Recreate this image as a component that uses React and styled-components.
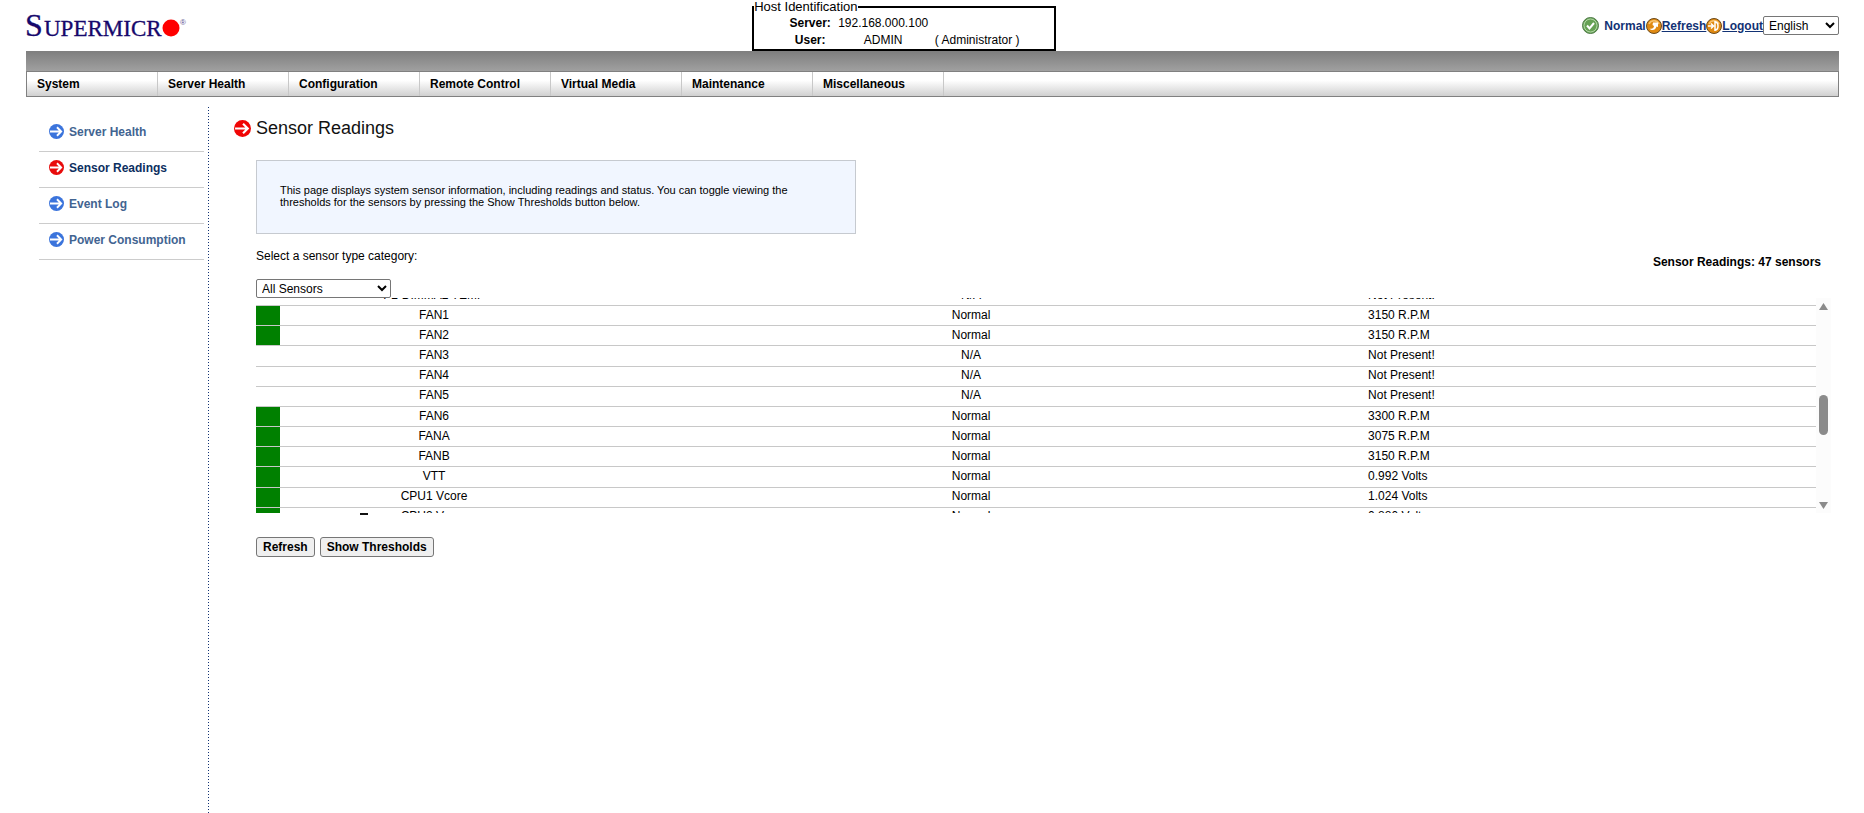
import React, { useLayoutEffect, useRef } from "react";
import styled, { createGlobalStyle } from "styled-components";

const GlobalStyle = createGlobalStyle`
  * {
    box-sizing: border-box;
  }

  body {
    margin: 0;
    background: #fff;
    color: #000;
    font-family: "Liberation Sans", Arial, sans-serif;
    font-size: 12px;
    line-height: 14px;
  }
`;

const Page = styled.div`
  min-height: 100vh;
  padding: 0 25px 0 26px;
  display: flex;
  flex-direction: column;
`;

const Header = styled.header`
  height: 51px;
  display: grid;
  grid-template-columns: 40% 304px 1fr;
  column-gap: 1px;
  align-items: start;
`;

const Logo = styled.svg`
  display: block;
  width: 164px;
  height: 36px;
  margin-top: 8px;
`;

const HostBox = styled.fieldset`
  height: 51px;
  margin: 0;
  padding: 0;
  border: 2px solid #000;
`;

const HostLegend = styled.legend`
  padding: 0;
  font-size: 13px;
`;

const HostTable = styled.table`
  width: 238px;
  margin: 0 auto;
  table-layout: fixed;
  border-collapse: collapse;
  text-align: center;

  th,
  td {
    height: 17px;
    padding: 0;
    white-space: nowrap;
  }
`;

const StatusBar = styled.div`
  margin-top: 16px;
  display: flex;
  justify-content: flex-end;
  align-items: center;
  color: #123274;
  font-weight: bold;
  line-height: 18px;
`;

const StatusText = styled.span`
  margin-left: 5px;
`;

const StatusLink = styled.a`
  display: flex;
  align-items: center;
  color: #123274;
`;

const Select = styled.select`
  width: ${(props) => props.$width};
  height: 19px;
  padding: 0 0 0 1px;
  border: 1px solid #767676;
  border-radius: 2px;
  background: #fff;
  color: #000;
  font-family: inherit;
  font-size: 12px;
`;

const Banner = styled.div`
  height: 20px;
  background: linear-gradient(#7e7e7e, #a0a0a0);
`;

const Menu = styled.nav`
  height: 26px;
  display: flex;
  border: 1px solid #808080;
  background: linear-gradient(#fff 35%, #d0d0d0);
`;

const MenuLink = styled.a`
  width: 131px;
  padding-left: 10px;
  border-right: 1px solid #c8c8c8;
  color: #000;
  font-weight: bold;
  line-height: 24px;
  text-decoration: none;
`;

const Body = styled.div`
  flex: 1;
  margin-top: 10px;
  display: flex;
`;

const Sidebar = styled.nav`
  width: 183px;
  padding: 9px 5px 0 13px;
  background: repeating-linear-gradient(#123274 0 1px, transparent 1px 3px) right top / 1px 100% no-repeat;
`;

const SideLink = styled.a`
  height: 36px;
  padding: 0 0 4px 10px;
  display: flex;
  align-items: center;
  gap: 5px;
  border-bottom: 1px solid #ccc;
  color: ${(props) => (props.$active ? "#0c2f5f" : "#426491")};
  font-weight: bold;
  text-decoration: none;
`;

const Main = styled.main`
  flex: 1;
  min-width: 0;
  padding: 10px 8px 24px 25px;
`;

const Title = styled.h1`
  height: 22px;
  margin: 0;
  display: flex;
  align-items: center;
  gap: 5px;
  color: #111;
  font-size: 18px;
  font-weight: normal;
  line-height: 22px;
`;

const Content = styled.div`
  margin-left: 22px;
`;

const Info = styled.p`
  max-width: 600px;
  min-height: 74px;
  margin: 21px 0 0;
  padding: 23px 60px 23px 23px;
  border: 1px solid #c6cad0;
  background: #f1f6ff;
  font-size: 11px;
  line-height: 12px;
`;

const Filter = styled.div`
  margin-top: 15px;
  display: flex;
  justify-content: space-between;
  align-items: flex-start;
`;

const FilterField = styled.div`
  display: flex;
  flex-direction: column;
  gap: 16px;
`;

const Count = styled.strong`
  margin: 6px 10px 0 0;
`;

const Readings = styled.div`
  height: 215px;
  display: flex;
`;

const Scroller = styled.div`
  flex: 1;
  min-width: 0;
  overflow: hidden;
`;

const SensorTable = styled.table`
  width: 100%;
  height: 242px;
  table-layout: fixed;
  border-collapse: separate;
  border-spacing: 0;

  td {
    padding: 0 0 2px;
    border-bottom: 1px solid #c8c8c8;
    text-align: center;
  }

  td:last-child {
    padding-left: 14px;
    text-align: left;
  }
`;

const Flag = styled.td`
  background: ${(props) => (props.$ok ? "#008000" : "transparent")};
  background-clip: padding-box;
`;

const Scrollbar = styled.div`
  width: 15px;
  padding: 5px 3px 4px;
  display: flex;
  flex-direction: column;
  align-items: center;
  background: #fcfcfc;
`;

const Thumb = styled.div`
  width: 9px;
  height: 40px;
  margin: 85px 0 auto;
  border-radius: 5px;
  background: #8b8b8b;
`;

const Dash = styled.div`
  width: 8px;
  height: 2px;
  margin-left: 104px;
  background: #111;
`;

const Actions = styled.div`
  margin-top: 22px;
  display: flex;
  gap: 5px;
`;

const Button = styled.button`
  height: 20px;
  padding: 0 6px;
  border: 1px solid #767676;
  border-radius: 3px;
  background: #efefef;
  color: #000;
  font-family: inherit;
  font-size: 12px;
  font-weight: bold;
`;

const ArrowIcon = ({ size, color }) => (
  <svg width={size} height={size} viewBox="0 0 16 16" aria-hidden="true">
    <circle cx="8" cy="8" r="8" fill={color} />
    <path d="M1 8h12M8.5 3.5 13 8l-4.5 4.5" fill="none" stroke="#fff" strokeWidth="2" />
  </svg>
);

const CheckIcon = () => (
  <svg width="17" height="17" viewBox="0 0 17 17" aria-hidden="true">
    <circle cx="8.5" cy="8.5" r="8" fill="#66a154" stroke="#4f7a48" />
    <circle cx="8.5" cy="8.5" r="6.5" fill="none" stroke="#b4d8a8" />
    <path d="m5 8.5 2.5 3 4.5-5.500" fill="none" stroke="#fff" strokeWidth="2" />
  </svg>
);

const OrangeIcon = ({ children }) => (
  <svg width="16" height="16" viewBox="0 0 16 16" aria-hidden="true">
    <circle cx="8" cy="8" r="7.5" fill="#e08a12" stroke="#6b4a1c" />
    <path d="M3 6a5.5 5.5 0 0 1 10 0" fill="none" stroke="#f8c470" strokeWidth="1.5" />
    {children}
  </svg>
);

const menu = [
  "System",
  "Server Health",
  "Configuration",
  "Remote Control",
  "Virtual Media",
  "Maintenance",
  "Miscellaneous",
];

const pages = ["Server Health", "Sensor Readings", "Event Log", "Power Consumption"];

const sensors = [
  ["P2-DIMMA2 TEMP", "N/A", "Not Present!"],
  ["FAN1", "Normal", "3150 R.P.M"],
  ["FAN2", "Normal", "3150 R.P.M"],
  ["FAN3", "N/A", "Not Present!"],
  ["FAN4", "N/A", "Not Present!"],
  ["FAN5", "N/A", "Not Present!"],
  ["FAN6", "Normal", "3300 R.P.M"],
  ["FANA", "Normal", "3075 R.P.M"],
  ["FANB", "Normal", "3150 R.P.M"],
  ["VTT", "Normal", "0.992 Volts"],
  ["CPU1 Vcore", "Normal", "1.024 Volts"],
  ["CPU2 Vcore", "Normal", "0.880 Volts"],
];

const SensorList = () => {
  const scroller = useRef(null);

  useLayoutEffect(() => {
    scroller.current.scrollTop = 12;
  }, []);

  return (
    <Readings>
      <Scroller ref={scroller}>
        <SensorTable>
          <colgroup>
            <col width="24" />
            <col width="19.75%" />
            <col width="49.1%" />
            <col />
          </colgroup>
          <tbody>
            {sensors.map(([name, status, reading]) => (
              <tr key={name}>
                <Flag $ok={status === "Normal"} />
                <td>{name}</td>
                <td>{status}</td>
                <td>{reading}</td>
              </tr>
            ))}
          </tbody>
        </SensorTable>
      </Scroller>
      <Scrollbar aria-hidden="true">
        <svg width="9" height="7" viewBox="0 0 9 7">
          <path d="M4.5 0 9 7H0z" fill="#8b8b8b" />
        </svg>
        <Thumb />
        <svg width="9" height="7" viewBox="0 0 9 7">
          <path d="M4.5 7 9 0H0z" fill="#8b8b8b" />
        </svg>
      </Scrollbar>
    </Readings>
  );
};

const App = () => {
  return (
    <>
      <GlobalStyle />
      <Page>
        <Header>
          <Logo viewBox="0 0 164 36" role="img" aria-label="Supermicro">
            <g fill="#16086c" stroke="#16086c" strokeWidth="0.3" fontFamily="Liberation Serif, serif">
              <text x="-1" y="28" fontSize="32">S</text>
              <text x="18" y="28" fontSize="23">UPERMICR</text>
            </g>
            <circle cx="145" cy="20" r="8.5" fill="#f00" />
            <text x="154" y="17" fontSize="8" fill="#5a5090">®</text>
          </Logo>
          <HostBox>
            <HostLegend>Host Identification</HostLegend>
            <HostTable>
              <colgroup>
                <col width="50" />
                <col width="96" />
                <col width="92" />
              </colgroup>
              <tbody>
                <tr>
                  <th scope="row">Server:</th>
                  <td>192.168.000.100</td>
                  <td />
                </tr>
                <tr>
                  <th scope="row">User:</th>
                  <td>ADMIN</td>
                  <td>( Administrator )</td>
                </tr>
              </tbody>
            </HostTable>
          </HostBox>
          <StatusBar>
            <CheckIcon />
            <StatusText>Normal</StatusText>
            <StatusLink href="#refresh">
              <OrangeIcon>
                <path d="M3.5 10.5c2.500 1 4.500-.5 4.500-2.500L6.500 7 7 4.500h5V9l-1.500-.5c-1 3.500-4.500 5-7 2z" fill="#fff" />
              </OrangeIcon>
              Refresh
            </StatusLink>
            <StatusLink href="#logout">
              <OrangeIcon>
                <path d="M2 8h5M5 5.5 7.5 8 5 10.5M9 3v10M9 4c4 0 4 8 0 8" fill="none" stroke="#fff" strokeWidth="1.5" />
              </OrangeIcon>
              Logout
            </StatusLink>
            <Select $width="76px" aria-label="Language">
              <option>English</option>
            </Select>
          </StatusBar>
        </Header>
        <Banner />
        <Menu>
          {menu.map((item) => (
            <MenuLink key={item} href="#menu">{item}</MenuLink>
          ))}
        </Menu>
        <Body>
          <Sidebar>
            {pages.map((item) => {
              const active = item === "Sensor Readings";
              return (
                <SideLink key={item} href="#page" $active={active}>
                  <ArrowIcon size={15} color={active ? "#e80c0c" : "#3b74dc"} />
                  {item}
                </SideLink>
              );
            })}
          </Sidebar>
          <Main>
            <Title>
              <ArrowIcon size={17} color="#f00505" />
              Sensor Readings
            </Title>
            <Content>
              <Info>
                This page displays system sensor information, including readings and status. You can
                toggle viewing the thresholds for the sensors by pressing the Show Thresholds button
                below.
              </Info>
              <Filter>
                <FilterField>
                  <label htmlFor="category">Select a sensor type category:</label>
                  <Select id="category" $width="135px">
                    <option>All Sensors</option>
                  </Select>
                </FilterField>
                <Count>Sensor Readings: 47 sensors</Count>
              </Filter>
              <SensorList />
              <Dash />
              <Actions>
                <Button type="button">Refresh</Button>
                <Button type="button">Show Thresholds</Button>
              </Actions>
            </Content>
          </Main>
        </Body>
      </Page>
    </>
  );
};

export default App;
